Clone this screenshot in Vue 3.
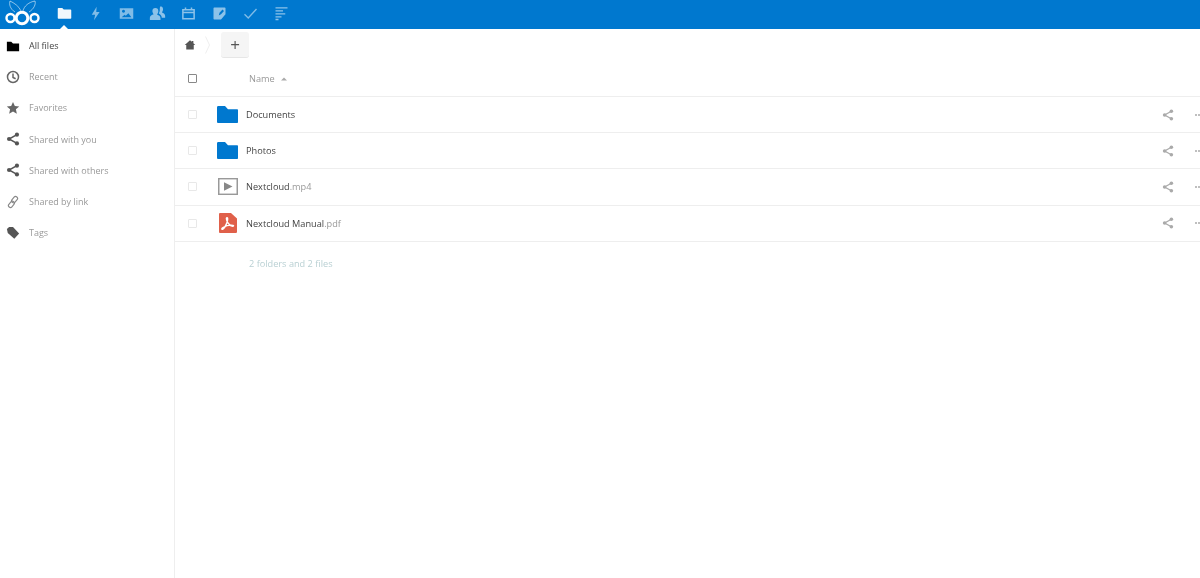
<script setup>
const apps = [
  { id: 'files', w: 15, paths: ['M1 3.500C1 3 1.400 2.500 2 2.500h5l2 2h9c.6 0 1 .4 1 1V16c0 .6-.4 1-1 1H2c-.6 0-1-.4-1-1z'], fill: true, op: 0.95 },
  { id: 'activity', w: 15, paths: ['M11.500 1 5 11.500h4.500L8 19l7.500-11H11z'], fill: true, op: 0.5 },
  { id: 'gallery', w: 15, paths: ['M1 3h18v14H1zM3.500 15h13l-4-5.500-3.500 3.500-1.500-1.500zM6 5a2 2 0 1 0 .01 0z'], fill: true, op: 0.5, even: true },
  { id: 'contacts', w: 17, paths: ['M7.500 3.500a3.500 3.500 0 0 1 3.500 3.500c0 2-.8 3-1.500 4.200 2 1 4 1.800 4 4.300v2H1v-2.500c0-2.300 2.500-3 4.500-4C4.800 10 4 8.500 4 7a3.500 3.500 0 0 1 3.500-3.500zM13 1.500A3.500 3.500 0 0 1 16.500 5c0 1.500-.7 2.800-1.300 3.800 2 .8 3.800 1.700 3.800 4v2.200h-4c0-2.500-1.500-4-3.500-5 1-2 1.300-3 1.200-5 0-1 0-2.300.8-3.500z'], fill: true, op: 0.55 },
  { id: 'calendar', w: 15, paths: ['M2.500 5h15v12h-15zM2.500 5h15v3.500h-15zM6 2v3.500M14 2v3.500'], fill: false, op: 0.55 },
  { id: 'notes', w: 15, paths: ['M3 2h14c.6 0 1 .4 1 1v8l-6 7H3c-.6 0-1-.4-1-1V3c0-.6.4-1 1-1zM9 12.500l1-3.500 4-4.500 2 2-4 4.500z'], fill: true, op: 0.55, even: true },
  { id: 'tasks', w: 15, paths: ['M2 11l5 5L18 4'], fill: false, op: 0.5, sw: 1.800 },
  { id: 'deck', w: 15, paths: ['M2 2.500h16M2 6.500h10M2 10.500h13M2 14.500h8M2 18h4'], fill: false, op: 0.55, sw: 1.900 }
]
const nav = [
  { label: 'All files', icon: 'folder', active: true },
  { label: 'Recent', icon: 'clock' },
  { label: 'Favorites', icon: 'star' },
  { label: 'Shared with you', icon: 'share' },
  { label: 'Shared with others', icon: 'share' },
  { label: 'Shared by link', icon: 'link' },
  { label: 'Tags', icon: 'tag' }
]
const files = [
  { name: 'Documents', ext: '', type: 'folder' },
  { name: 'Photos', ext: '', type: 'folder' },
  { name: 'Nextcloud', ext: '.mp4', type: 'video' },
  { name: 'Nextcloud Manual', ext: '.pdf', type: 'pdf' }
]
</script>

<template>
  <div class="page">
    <header class="topbar">
      <svg class="logo" viewBox="0 0 40 29" width="40" height="29">
        <g fill="none" stroke="#fff">
          <path d="M21 11C19 6 14 3 10 1c-1 3 0 8 5 11M23 11c1-5 6-9 12-10 1 3-1 8-6 11" stroke-width="1" opacity=".55" />
          <circle cx="22" cy="18" r="5.800" stroke-width="3" />
          <circle cx="10.500" cy="18" r="4" stroke-width="2.400" />
          <circle cx="34.500" cy="18" r="4" stroke-width="2.400" />
        </g>
      </svg>
      <nav class="apps">
        <span v-for="a in apps" :key="a.id" class="app" :class="{ current: a.id === 'files' }">
          <svg viewBox="0 0 20 20" :width="a.w" :height="a.w" :style="{ opacity: a.op }">
            <path
              v-for="d in a.paths"
              :key="d"
              :d="d"
              :fill="a.fill ? '#fff' : 'none'"
              :fill-rule="a.even ? 'evenodd' : 'nonzero'"
              :stroke="a.fill ? 'none' : '#fff'"
              :stroke-width="a.fill ? 0 : (a.sw || 2)"
            />
          </svg>
        </span>
      </nav>
    </header>

    <div class="body">
      <aside class="sidebar">
        <a v-for="n in nav" :key="n.label" class="nav-item" :class="{ active: n.active }">
          <svg class="nav-icon" viewBox="0 0 16 16" width="14" height="14">
            <path v-if="n.icon === 'folder'" d="M1 3h5l2 2h7v9H1z" fill="#000" />
            <g v-else-if="n.icon === 'clock'" fill="none" stroke="#666" stroke-width="1.700">
              <circle cx="8" cy="8" r="6.300" />
              <path d="M8 4v4.500l3 1.500" />
            </g>
            <path v-else-if="n.icon === 'star'" d="m8 1 2.100 4.700 5 .5-3.800 3.300 1.100 5L8 11.900l-4.400 2.600 1.100-5L.9 6.200l5-.5z" fill="#666" />
            <g v-else-if="n.icon === 'share'" fill="#555">
              <circle cx="12.500" cy="3" r="2.400" />
              <circle cx="3.500" cy="8" r="2.400" />
              <circle cx="12.500" cy="13" r="2.400" />
              <path d="M12.500 3 3.500 8l9 5" fill="none" stroke="#555" stroke-width="1.700" />
            </g>
            <g v-else-if="n.icon === 'link'" fill="none" stroke="#888" stroke-width="1.300">
              <rect x="7.500" y="1.500" width="4.500" height="8" rx="2.200" transform="rotate(40 10 5.500)" />
              <rect x="4" y="6.500" width="4.500" height="8" rx="2.200" transform="rotate(40 6 10.500)" />
            </g>
            <path v-else d="M1 3.500 3.500 1H8l7 7.500-5.500 6L2 8z" fill="#555" />
          </svg>
          <span>{{ n.label }}</span>
        </a>
      </aside>

      <main class="main">
        <div class="crumbs">
          <svg viewBox="0 0 16 16" width="12" height="12" class="home">
            <path d="M8 1.500 1 8h2v6h10V8h2l-2.500-2.300V2.500h-2v1.300z" fill="#555" />
          </svg>
          <svg viewBox="0 0 5 18" width="5" height="18" class="sep">
            <path d="M.5.5l4 8.500-4 8.500" fill="none" stroke="#eee" />
          </svg>
          <button class="add">+</button>
        </div>

        <div class="head">
          <span class="check dark"></span>
          <span class="name-head">Name</span>
          <svg class="caret" viewBox="0 0 6 4" width="6" height="4"><path d="M0 3.500 3 .5l3 3z" fill="#aaa" /></svg>
        </div>

        <div v-for="f in files" :key="f.name" class="row">
          <span class="check"></span>
          <span class="file-icon">
            <svg v-if="f.type === 'folder'" viewBox="0 0 21 18" width="21" height="17" preserveAspectRatio="none">
              <path d="M0 1.500C0 .7.500 0 1.200 0H8l3 3.500h9c.6 0 1 .4 1 1V17c0 .6-.4 1-1 1H1c-.6 0-1-.4-1-1z" fill="#0078cf" />
            </svg>
            <svg v-else-if="f.type === 'video'" viewBox="0 0 20 18" width="20" height="17" preserveAspectRatio="none">
              <rect x=".75" y=".75" width="18.500" height="16.500" fill="#fff" stroke="#999" stroke-width="1.500" />
              <path d="M6 4.500 14.500 9 6 13.500z" fill="#888" />
            </svg>
            <svg v-else viewBox="0 0 18 22" width="18" height="20" preserveAspectRatio="none">
              <path d="M1 0h11l6 6v15c0 .6-.4 1-1 1H1c-.6 0-1-.4-1-1V1c0-.6.400-1 1-1z" fill="#e0604a" />
              <path d="M8 5c1 0 .8 3-.2 6S5 17 3.500 18c-1 .4-1-1 .5-2s6-3 10-2.500c1 .3.600 1.500-1 1S8.500 11 8 9s-1-4 0-4z" fill="none" stroke="#fff" stroke-width="1.400" />
            </svg>
          </span>
          <span class="file-name">{{ f.name }}<span class="ext">{{ f.ext }}</span></span>
          <span class="actions">
            <svg viewBox="0 0 16 16" width="12" height="12">
              <g fill="#aaa">
                <circle cx="12.500" cy="3" r="2.400" />
                <circle cx="3.500" cy="8" r="2.400" />
                <circle cx="12.500" cy="13" r="2.400" />
                <path d="M12.500 3 3.500 8l9 5" fill="none" stroke="#aaa" stroke-width="1.700" />
              </g>
            </svg>
            <span class="more"><i></i><i></i><i></i></span>
          </span>
        </div>

        <div class="summary">2 folders and 2 files</div>
      </main>
    </div>
  </div>
</template>

<style scoped>
.page {
  width: 1200px;
  height: 578px;
  overflow: hidden;
  background: #fff;
  font-family: "Open Sans", "Liberation Sans", sans-serif;
  font-size: 9.200px;
  color: #555;
  display: flex;
  flex-direction: column;
  filter: blur(0.45px);
}
.topbar {
  height: 29px;
  flex: none;
  background: #0078cf;
  display: flex;
  align-items: center;
}
.logo {
  flex: none;
}
.apps {
  display: flex;
  margin-left: 9px;
}
.app {
  width: 31px;
  height: 29px;
  box-sizing: border-box;
  padding-bottom: 3px;
  display: flex;
  align-items: center;
  justify-content: center;
  position: relative;
}
.app.current::after {
  content: "";
  position: absolute;
  bottom: 0;
  left: 11px;
  border: 4.500px solid transparent;
  border-top: 0;
  border-bottom-color: #fff;
}
.body {
  flex: 1;
  display: flex;
  min-height: 0;
}
.sidebar {
  width: 174px;
  flex: none;
  border-right: 1px solid #eee;
  display: flex;
  flex-direction: column;
  padding-top: 1px;
}
.nav-item {
  height: 31.200px;
  display: flex;
  align-items: center;
  padding-left: 6px;
  gap: 9px;
  color: #999;
  font-size: 9px;
}
.nav-item.active {
  color: #444;
}
.nav-icon {
  flex: none;
}
.main {
  flex: 1;
  min-width: 0;
}
.crumbs {
  height: 32px;
  display: flex;
  align-items: center;
  padding-left: 9px;
}
.home {
  flex: none;
}
.sep {
  margin-left: 9px;
  flex: none;
}
.add {
  margin-left: 11px;
  width: 28px;
  height: 26px;
  border: 0;
  border-bottom: 1px solid #e6e6e6;
  border-radius: 3px;
  background: #f5f5f5;
  color: #555;
  font-family: "Open Sans", sans-serif;
  font-size: 17px;
  line-height: 1;
  padding: 0;
}
.head {
  height: 35px;
  display: flex;
  align-items: center;
  padding-left: 13px;
  border-bottom: 1px solid #eee;
}
.check {
  width: 7px;
  height: 7px;
  border: 1px solid #e8e8e8;
  border-radius: 1px;
  flex: none;
}
.check.dark {
  border-color: #888;
}
.name-head {
  margin-left: 52px;
  color: #999;
}
.caret {
  margin-left: 6px;
}
.row {
  height: 35.200px;
  display: flex;
  align-items: center;
  padding-left: 13px;
  border-bottom: 1px solid #eee;
}
.file-icon {
  width: 21px;
  height: 22px;
  margin-left: 20px;
  display: flex;
  align-items: center;
  justify-content: center;
  flex: none;
}
.file-name {
  margin-left: 8px;
  color: #444;
}
.ext {
  color: #999;
}
.actions {
  margin-left: auto;
  display: flex;
  align-items: center;
  gap: 21px;
  margin-right: -2px;
}
.more {
  display: flex;
  gap: 1px;
  width: 7px;
}
.more i {
  width: 2px;
  height: 2px;
  border-radius: 50%;
  background: #aaa;
  flex: none;
}
.summary {
  margin-top: 15px;
  padding-left: 74px;
  color: #b9d0d3;
}
</style>
